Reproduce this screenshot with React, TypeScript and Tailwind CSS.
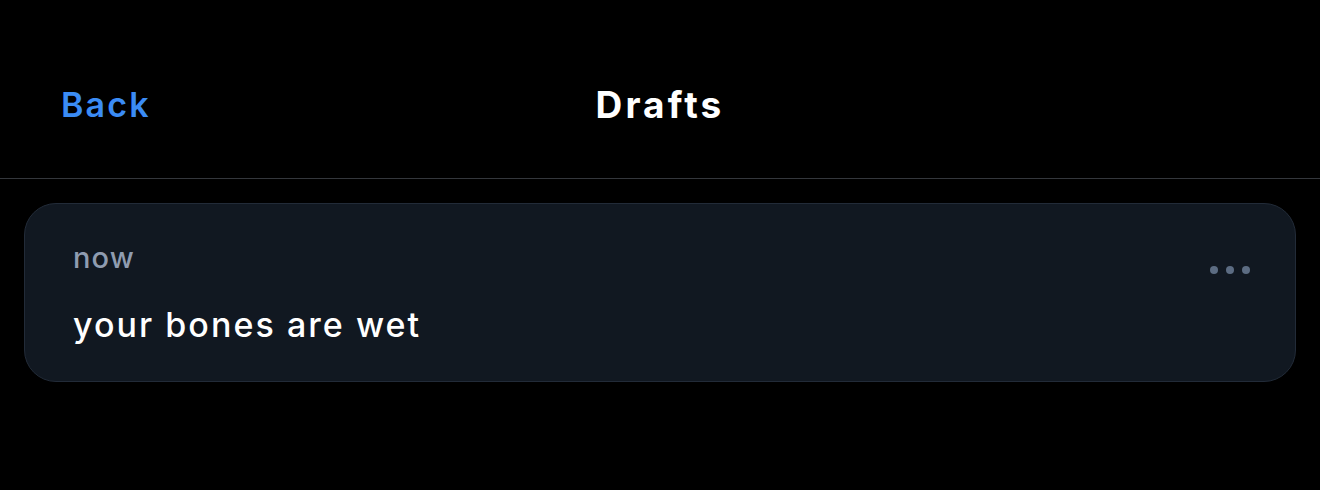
import React from "react";

const App = () => {
  return (
    <div className="h-[490px] w-full bg-black font-['Inter','Noto_Sans',sans-serif] text-white">
      <header className="relative flex h-[179px] items-center justify-center border-b border-[#34373c] pt-[31px]">
        <button className="absolute left-[61px] top-[85px] text-[34px] font-semibold leading-[40px] tracking-[0.065em] text-[#3b8cf5]">
          Back
        </button>
        <h1 className="text-[37px] font-bold leading-[40px] tracking-[0.085em]">Drafts</h1>
      </header>
      <div className="px-[24px] pt-[24px]">
        <div className="relative h-[179px] rounded-[32px] border border-[#222b38] bg-[#111821] pl-[48px] pr-[44px] pt-[34px]">
          <p className="text-[29px] font-medium leading-[40px] tracking-[0.04em] text-[#8f9cb0]">now</p>
          <p className="mt-[25px] text-[34px] font-medium leading-[44px] tracking-[0.06em] text-white">your bones are wet</p>
          <div className="absolute right-[45px] top-[62px] flex gap-[8px]">
            <span className="h-[8px] w-[8px] rounded-full bg-[#5c6c82]" />
            <span className="h-[8px] w-[8px] rounded-full bg-[#5c6c82]" />
            <span className="h-[8px] w-[8px] rounded-full bg-[#5c6c82]" />
          </div>
        </div>
      </div>
    </div>
  );
};

export default App;
